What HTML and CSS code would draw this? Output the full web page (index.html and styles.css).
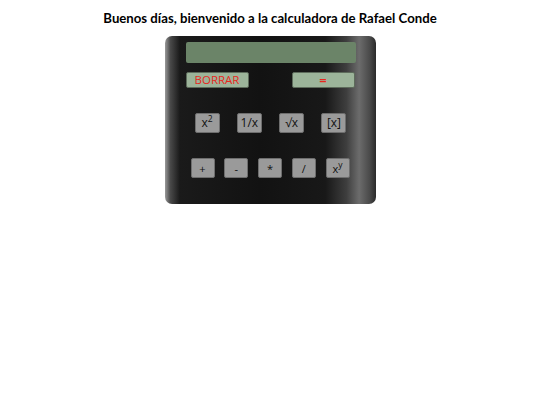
FILE: index.html
```html
<!DOCTYPE html>
<html lang="es">
<head>
<meta charset="utf-8">
<title>Calculadora</title>
<link rel="stylesheet" href="styles.css">
</head>
<body>
<h1 class="title">Buenos días, bienvenido a la calculadora de Rafael Conde</h1>
<div class="calc">
  <div class="display"></div>
  <div class="row-top">
    <button class="key key-green key-clear">BORRAR</button>
    <button class="key key-green key-eq">=</button>
  </div>
  <div class="row row-1">
    <button class="key key-grey">x<sup>2</sup></button>
    <button class="key key-grey">1/x</button>
    <button class="key key-grey">√x</button>
    <button class="key key-grey">[x]</button>
  </div>
  <div class="row row-2">
    <button class="key key-grey">+</button>
    <button class="key key-grey">-</button>
    <button class="key key-grey">*</button>
    <button class="key key-grey">/</button>
    <button class="key key-grey">x<sup>y</sup></button>
  </div>
</div>
</body>
</html>
```
FILE: styles.css
```css
html, body {
  margin: 0;
  padding: 0;
  background: #ffffff;
}
body {
  font-family: "Open Sans", "DejaVu Sans", sans-serif;
}
.title {
  margin: 9px 0 0 0;
  font-family: Lato, "Open Sans", sans-serif;
  font-size: 13.2px;
  line-height: 18px;
  font-weight: 700;
  text-align: center;
  color: #000;
}
.calc {
  box-sizing: border-box;
  width: 211px;
  height: 168px;
  margin: 9px auto 0 auto;
  border-radius: 7px;
  background: linear-gradient(to right, #9a9a9a 0%, #4a4a4a 2.5%, #1a1a1a 7%, #121212 45%, #181818 76%, #3e3e3e 86%, #6c6c6c 92%, #4a4a4a 97%, #2a2a2a 100%);
  display: flex;
  flex-direction: column;
  padding-top: 6px;
}
.display {
  box-sizing: border-box;
  height: 21px;
  margin: 0 20px 0 21px;
  background: #6b8468;
  border-radius: 2px;
}
.row-top {
  display: flex;
  justify-content: space-between;
  margin: 9px 21px 0 21px;
}
.key {
  box-sizing: border-box;
  margin: 0;
  padding: 0;
  font-family: "Open Sans", "DejaVu Sans", sans-serif;
  line-height: 1;
  cursor: pointer;
}
.key-green {
  width: 63px;
  height: 16px;
  background: #9cb49a;
  border: 1px solid #5d6b5b;
  border-radius: 2px;
  color: #e8281e;
  font-size: 11.5px;
}
.key-eq {
  font-size: 13px;
  font-weight: 600;
}
.row {
  display: flex;
  justify-content: space-between;
}
.row-1 {
  margin: 25px 29px 0 30px;
}
.row-2 {
  margin: 25px 26px 0 26px;
}
.key-grey {
  height: 20px;
  background: #9a9a9a;
  border: 1px solid #6e6e6e;
  border-radius: 2px;
  color: #111111;
  font-size: 12px;
}
.row-1 .key-grey {
  width: 25px;
}
.row-2 .key-grey {
  width: 24px;
  font-size: 11px;
}
.key sup {
  font-size: 8.5px;
  line-height: 0;
  vertical-align: 5px;
}
```
